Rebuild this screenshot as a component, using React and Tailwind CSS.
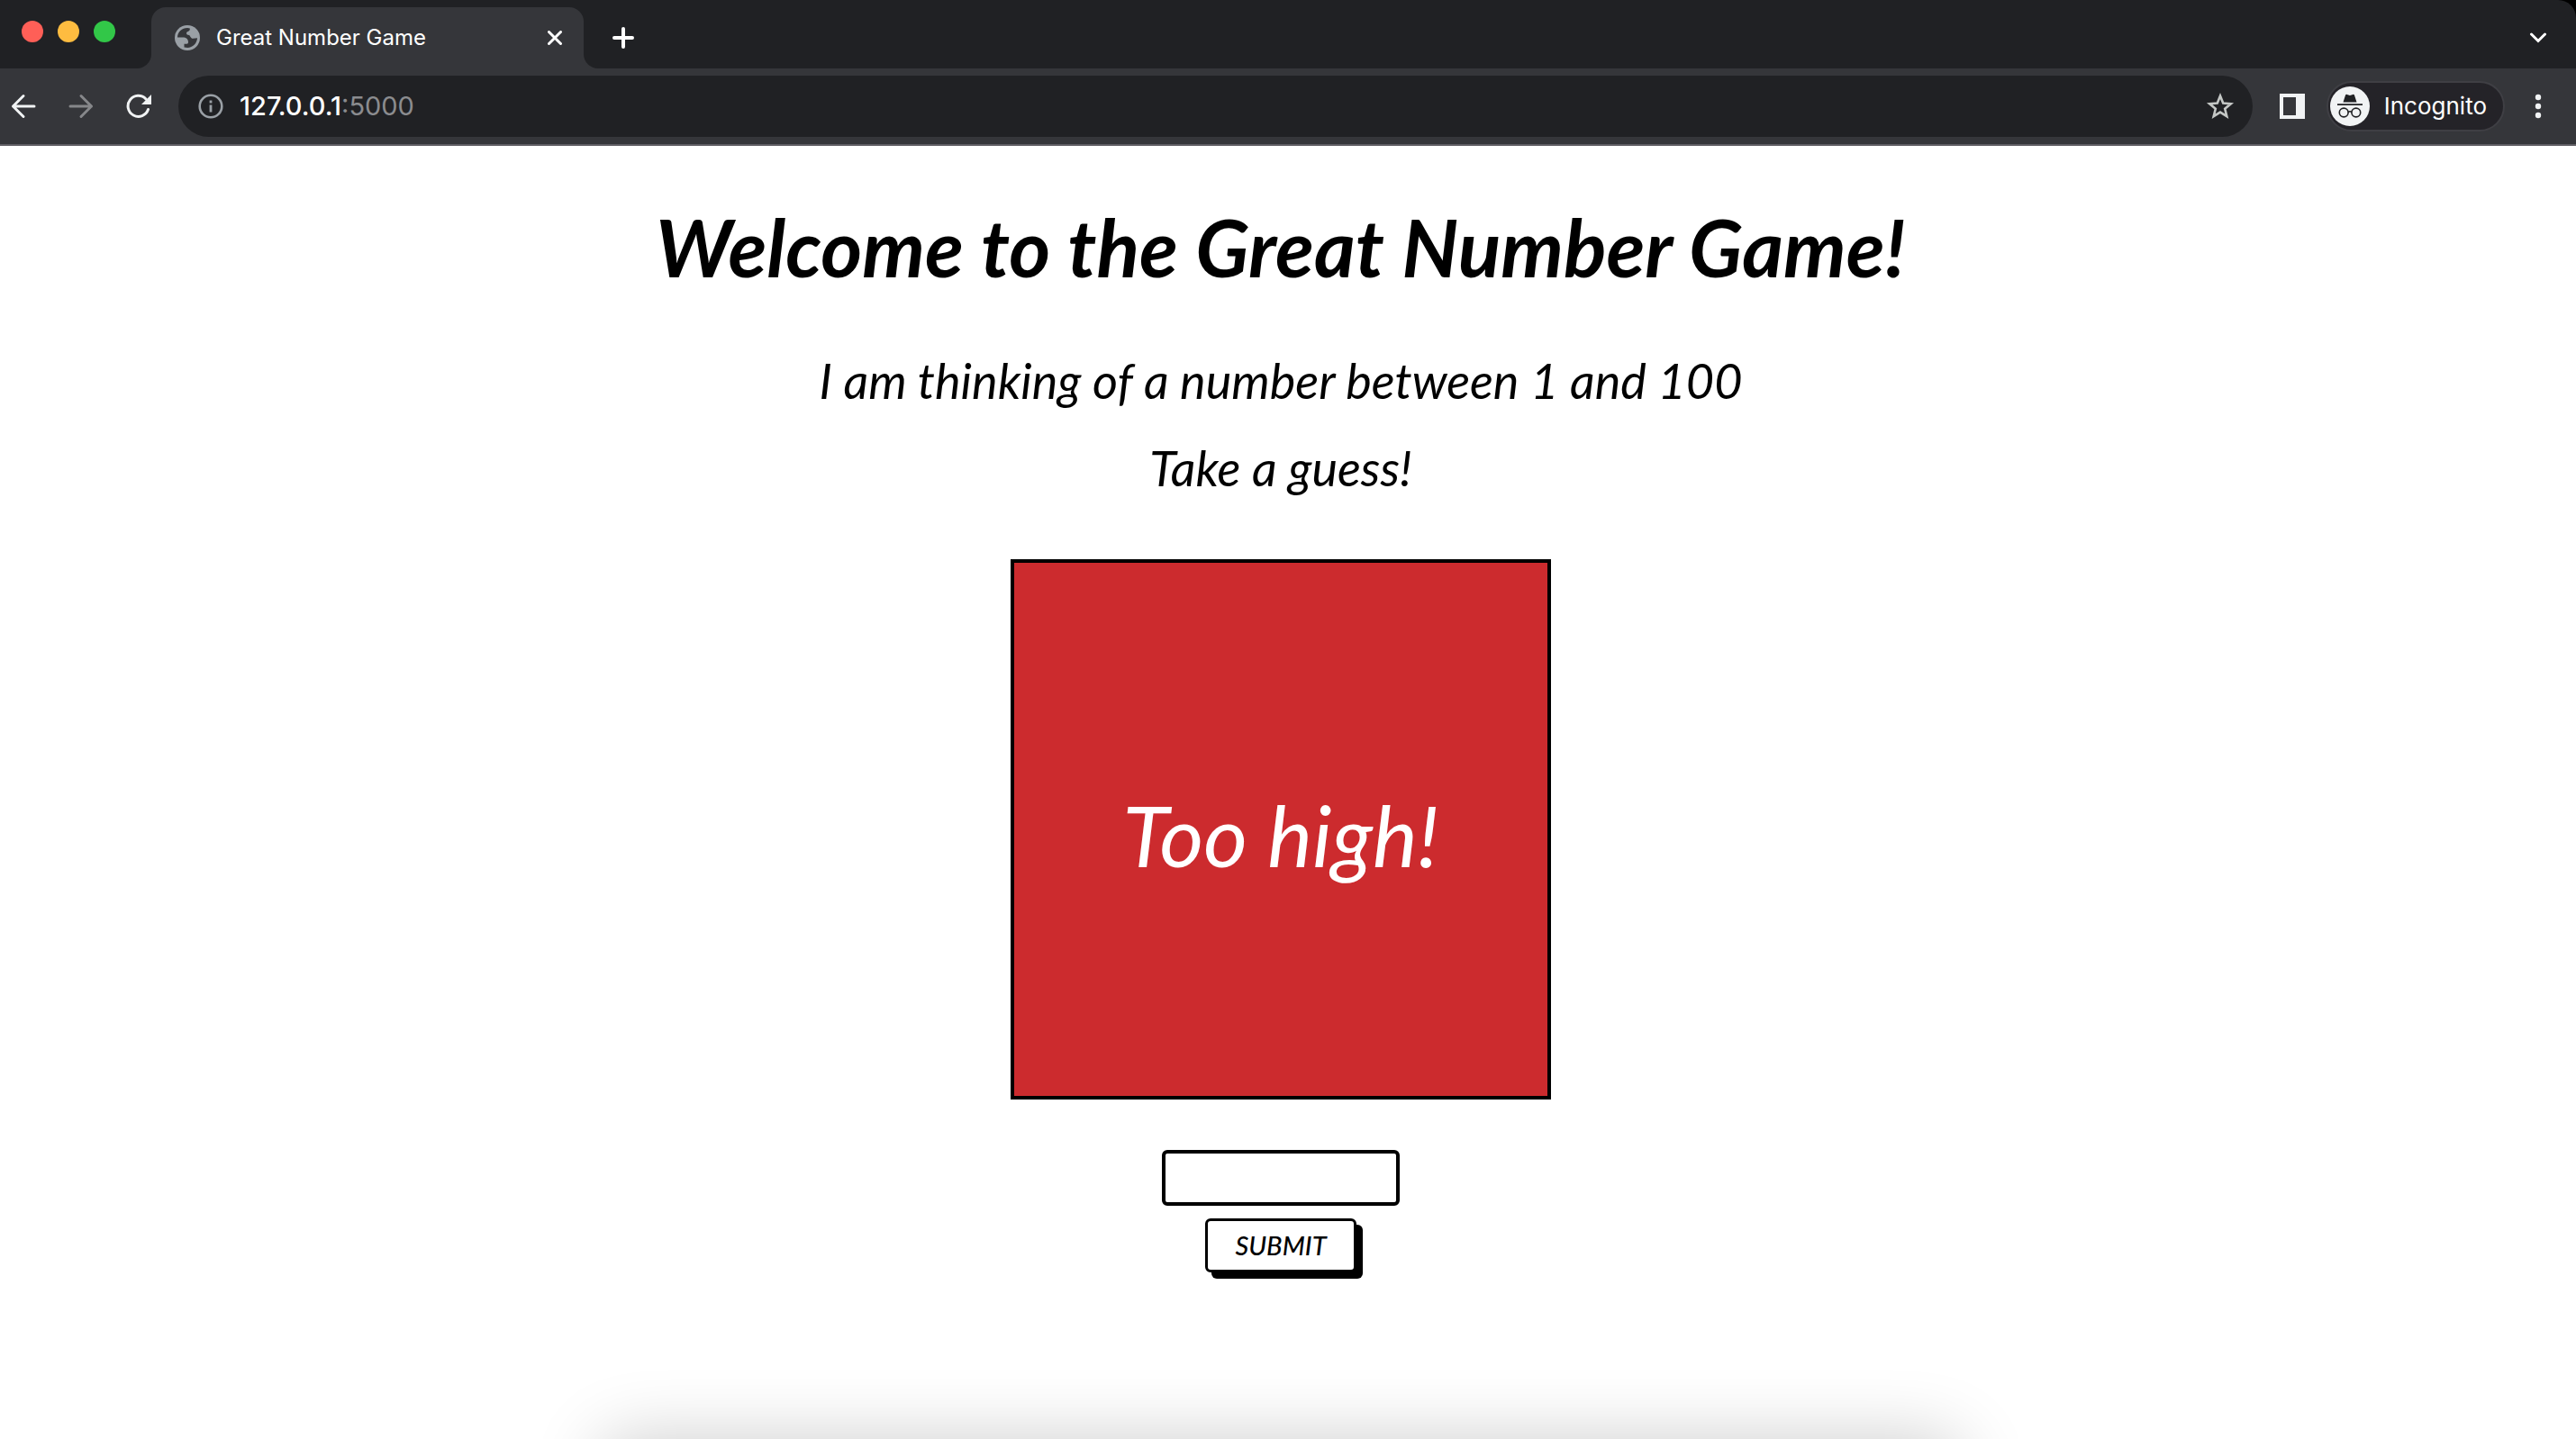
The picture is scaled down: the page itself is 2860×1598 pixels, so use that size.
import { useState } from "react";

function GlobeIcon() {
  return (
    <svg className="size-7" viewBox="0 0 28 28" aria-hidden="true">
      <circle cx="14" cy="14" r="14" fill="#9aa0a6" />
      <path d="M3 13.500C3.200 7.600 8 3 14.200 3l2.600.4c.3 1.800-.6 3.100-2.300 3.600-1.300.4-1.600 1.300-1.400 2.300.2 1.200 1 1.500 2.600 1.600 1.500.1 1.600 3.600 4.600 3.900l4.800-.6C24.700 20 20 24.800 14.200 25l-3.700-.6v-3.600h2.800c1.200 0 1.700-.8 1.700-2.200 0-3.200-2.500-5.100-6-5.100z" fill="#35363a" />
    </svg>
  );
}

function ArrowIcon({ className }) {
  return (
    <svg className={className} viewBox="0 0 28 28" fill="none" stroke="currentColor" strokeWidth="3" strokeLinecap="round" strokeLinejoin="round" aria-hidden="true">
      <path d="M26 14H2.500M14 2.500 2.500 14 14 25.500" />
    </svg>
  );
}

function ReloadIcon() {
  return (
    <svg className="size-7" viewBox="0 0 28 28" aria-hidden="true">
      <path d="M24.500 17.500A11.500 11.500 0 1 1 22 6" fill="none" stroke="#f1f3f4" strokeWidth="3" strokeLinecap="round" />
      <path d="M28 1v11H17z" fill="#f1f3f4" />
    </svg>
  );
}

function InfoIcon() {
  return (
    <svg className="size-7" viewBox="0 0 28 28" aria-hidden="true">
      <circle cx="14" cy="14" r="12.300" fill="none" stroke="#9aa0a6" strokeWidth="2.600" />
      <path d="M12.600 7.500h2.800v3h-2.800zM12.600 12.500h2.800v8h-2.800z" fill="#9aa0a6" />
    </svg>
  );
}

function StarIcon() {
  return (
    <svg className="size-8" viewBox="0 0 32 32" fill="none" stroke="#c4c7c5" strokeWidth="2.600" aria-hidden="true">
      <path d="m16 4.500 3.200 8 8.600.7-6.600 5.500 2.100 8.400-7.300-4.500-7.300 4.500 2.100-8.400-6.600-5.500 8.600-.7z" />
    </svg>
  );
}

function IncognitoIcon() {
  return (
    <svg className="size-11" viewBox="0 0 44 44" aria-hidden="true">
      <circle cx="22" cy="22" r="22" fill="#f1f3f4" />
      <path d="M14.500 17.500 17 9.800c.3-.8 1-1.200 1.800-.9l3.200 1 3.200-1c.8-.3 1.500.1 1.800.9l2.500 7.700zM8 19.200h28v1.800H8z" fill="#202124" />
      <g fill="none" stroke="#202124" strokeWidth="1.600">
        <circle cx="15.200" cy="29" r="4.900" />
        <circle cx="28.800" cy="29" r="4.900" />
        <path d="M20 28.500c1.300-.9 2.700-.9 4 0" />
      </g>
    </svg>
  );
}

function TabStrip() {
  return (
    <div className="flex h-19 bg-[#202124] rounded-tr-[20px] pr-8">
      <div className="flex gap-4 pl-6 pt-[23px]">
        <button aria-label="Close window" className="size-6 rounded-full bg-[#ff5f57]" />
        <button aria-label="Minimize window" className="size-6 rounded-full bg-[#febc40]" />
        <button aria-label="Zoom window" className="size-6 rounded-full bg-[#32c748]" />
      </div>
      <span className="ml-6 size-4 self-end bg-[#35363a]"><span className="block size-4 rounded-br-2xl bg-[#202124]" /></span>
      <div className="mt-2 flex w-120 items-center rounded-t-2xl bg-[#35363a] pl-[26px] pr-5">
        <GlobeIcon />
        <span className="ml-[18px] grow text-[24px] leading-8 text-white">Great Number Game</span>
        <button aria-label="Close tab" className="p-1">
          <svg className="size-4" viewBox="0 0 16 16" stroke="#fff" strokeWidth="3" strokeLinecap="round" aria-hidden="true"><path d="m1.500 1.500 13 13m0-13-13 13" /></svg>
        </button>
      </div>
      <span className="size-4 self-end bg-[#35363a]"><span className="block size-4 rounded-bl-2xl bg-[#202124]" /></span>
      <button aria-label="New tab" className="ml-4 mt-2">
        <svg className="size-6" viewBox="0 0 24 24" stroke="#fff" strokeWidth="4" strokeLinecap="round" aria-hidden="true"><path d="M12 2v20M2 12h20" /></svg>
      </button>
      <button aria-label="Search tabs" className="ml-auto mt-2">
        <svg className="h-3 w-5" viewBox="0 0 20 12" fill="none" stroke="#fff" strokeWidth="3" strokeLinecap="round" aria-hidden="true"><path d="m2.500 2 7.500 7.500L17.500 2" /></svg>
      </button>
    </div>
  );
}

function Toolbar() {
  return (
    <div className="flex items-center border-b-2 border-[#5f5d63] bg-[#35363a] py-2 pl-3 pr-[38px]">
      <button aria-label="Back"><ArrowIcon className="size-7 text-[#f1f3f4]" /></button>
      <button aria-label="Forward" disabled className="ml-9"><ArrowIcon className="size-7 rotate-180 text-[#86878a]" /></button>
      <button aria-label="Reload" className="ml-9"><ReloadIcon /></button>
      <div className="ml-[30px] flex h-17 grow items-center rounded-full bg-[#202124] pl-[22px] pr-5">
        <InfoIcon />
        <a href="#top" className="ml-[18px] grow text-[29px] leading-9 text-[#8b8c8f]"><span className="font-medium text-white">127.0.0.1</span>:5000</a>
        <button aria-label="Bookmark this tab"><StarIcon /></button>
      </div>
      <button aria-label="Side panel" className="ml-[30px]">
        <svg className="size-7" viewBox="0 0 28 28" aria-hidden="true"><path d="M0 0h28v28H0zM4 4v20h14V4z" fill="#f1f3f4" fillRule="evenodd" /></svg>
      </button>
      <button className="ml-6 flex h-14 items-center rounded-full border-2 border-[#3f3f44] bg-[#242328] pl-[2px] pr-[18px] text-[26px] leading-8 text-white">
        <IncognitoIcon />
        <span className="ml-4">Incognito</span>
      </button>
      <button aria-label="Menu" className="ml-[33px]">
        <svg className="h-7 w-2" viewBox="0 0 8 28" fill="#f1f3f4" aria-hidden="true"><circle cx="4" cy="4" r="3.200" /><circle cx="4" cy="14" r="3.200" /><circle cx="4" cy="24" r="3.200" /></svg>
      </button>
    </div>
  );
}

export default function App() {
  const [guess, setGuess] = useState("");
  return (
    <div id="top" className="flex min-h-screen flex-col bg-white font-['Inter',sans-serif]">
      <header className="bg-black">
        <TabStrip />
        <Toolbar />
      </header>
      <main className="flex grow flex-col items-center overflow-hidden pr-4 pt-14 font-['Lato',sans-serif] text-black italic">
        <h1 className="text-[88px] leading-[112px] font-bold">Welcome to the Great Number Game!</h1>
        <p className="mt-11 text-[54px] leading-[97px]">I am thinking of a number between 1 and 100</p>
        <p className="text-[54px] leading-[97px]">Take a guess!</p>
        <section className="mt-[53px] flex size-150 items-center justify-center border-4 border-black bg-[#cc2b2e] pt-3 text-[94px] leading-[120px] text-white">
          <p>Too high!</p>
        </section>
        <form className="mt-14 flex flex-col items-center gap-[14px]" onSubmit={(e) => e.preventDefault()}>
          <input aria-label="Your guess" type="text" value={guess} onChange={(e) => setGuess(e.target.value)} className="h-[62px] w-66 rounded-md border-4 border-black px-3 text-[28px] outline-none" />
          <button type="submit" className="h-15 w-42 rounded-md border-[3px] border-black bg-white text-[29px] leading-8 font-medium shadow-[7px_7px_0_0_#000]">SUBMIT</button>
        </form>
        <div className="mt-auto -mb-40 h-40 w-[53%] rounded-3xl shadow-[0_0_80px_0_rgba(0,0,0,0.2)]" />
      </main>
    </div>
  );
}
